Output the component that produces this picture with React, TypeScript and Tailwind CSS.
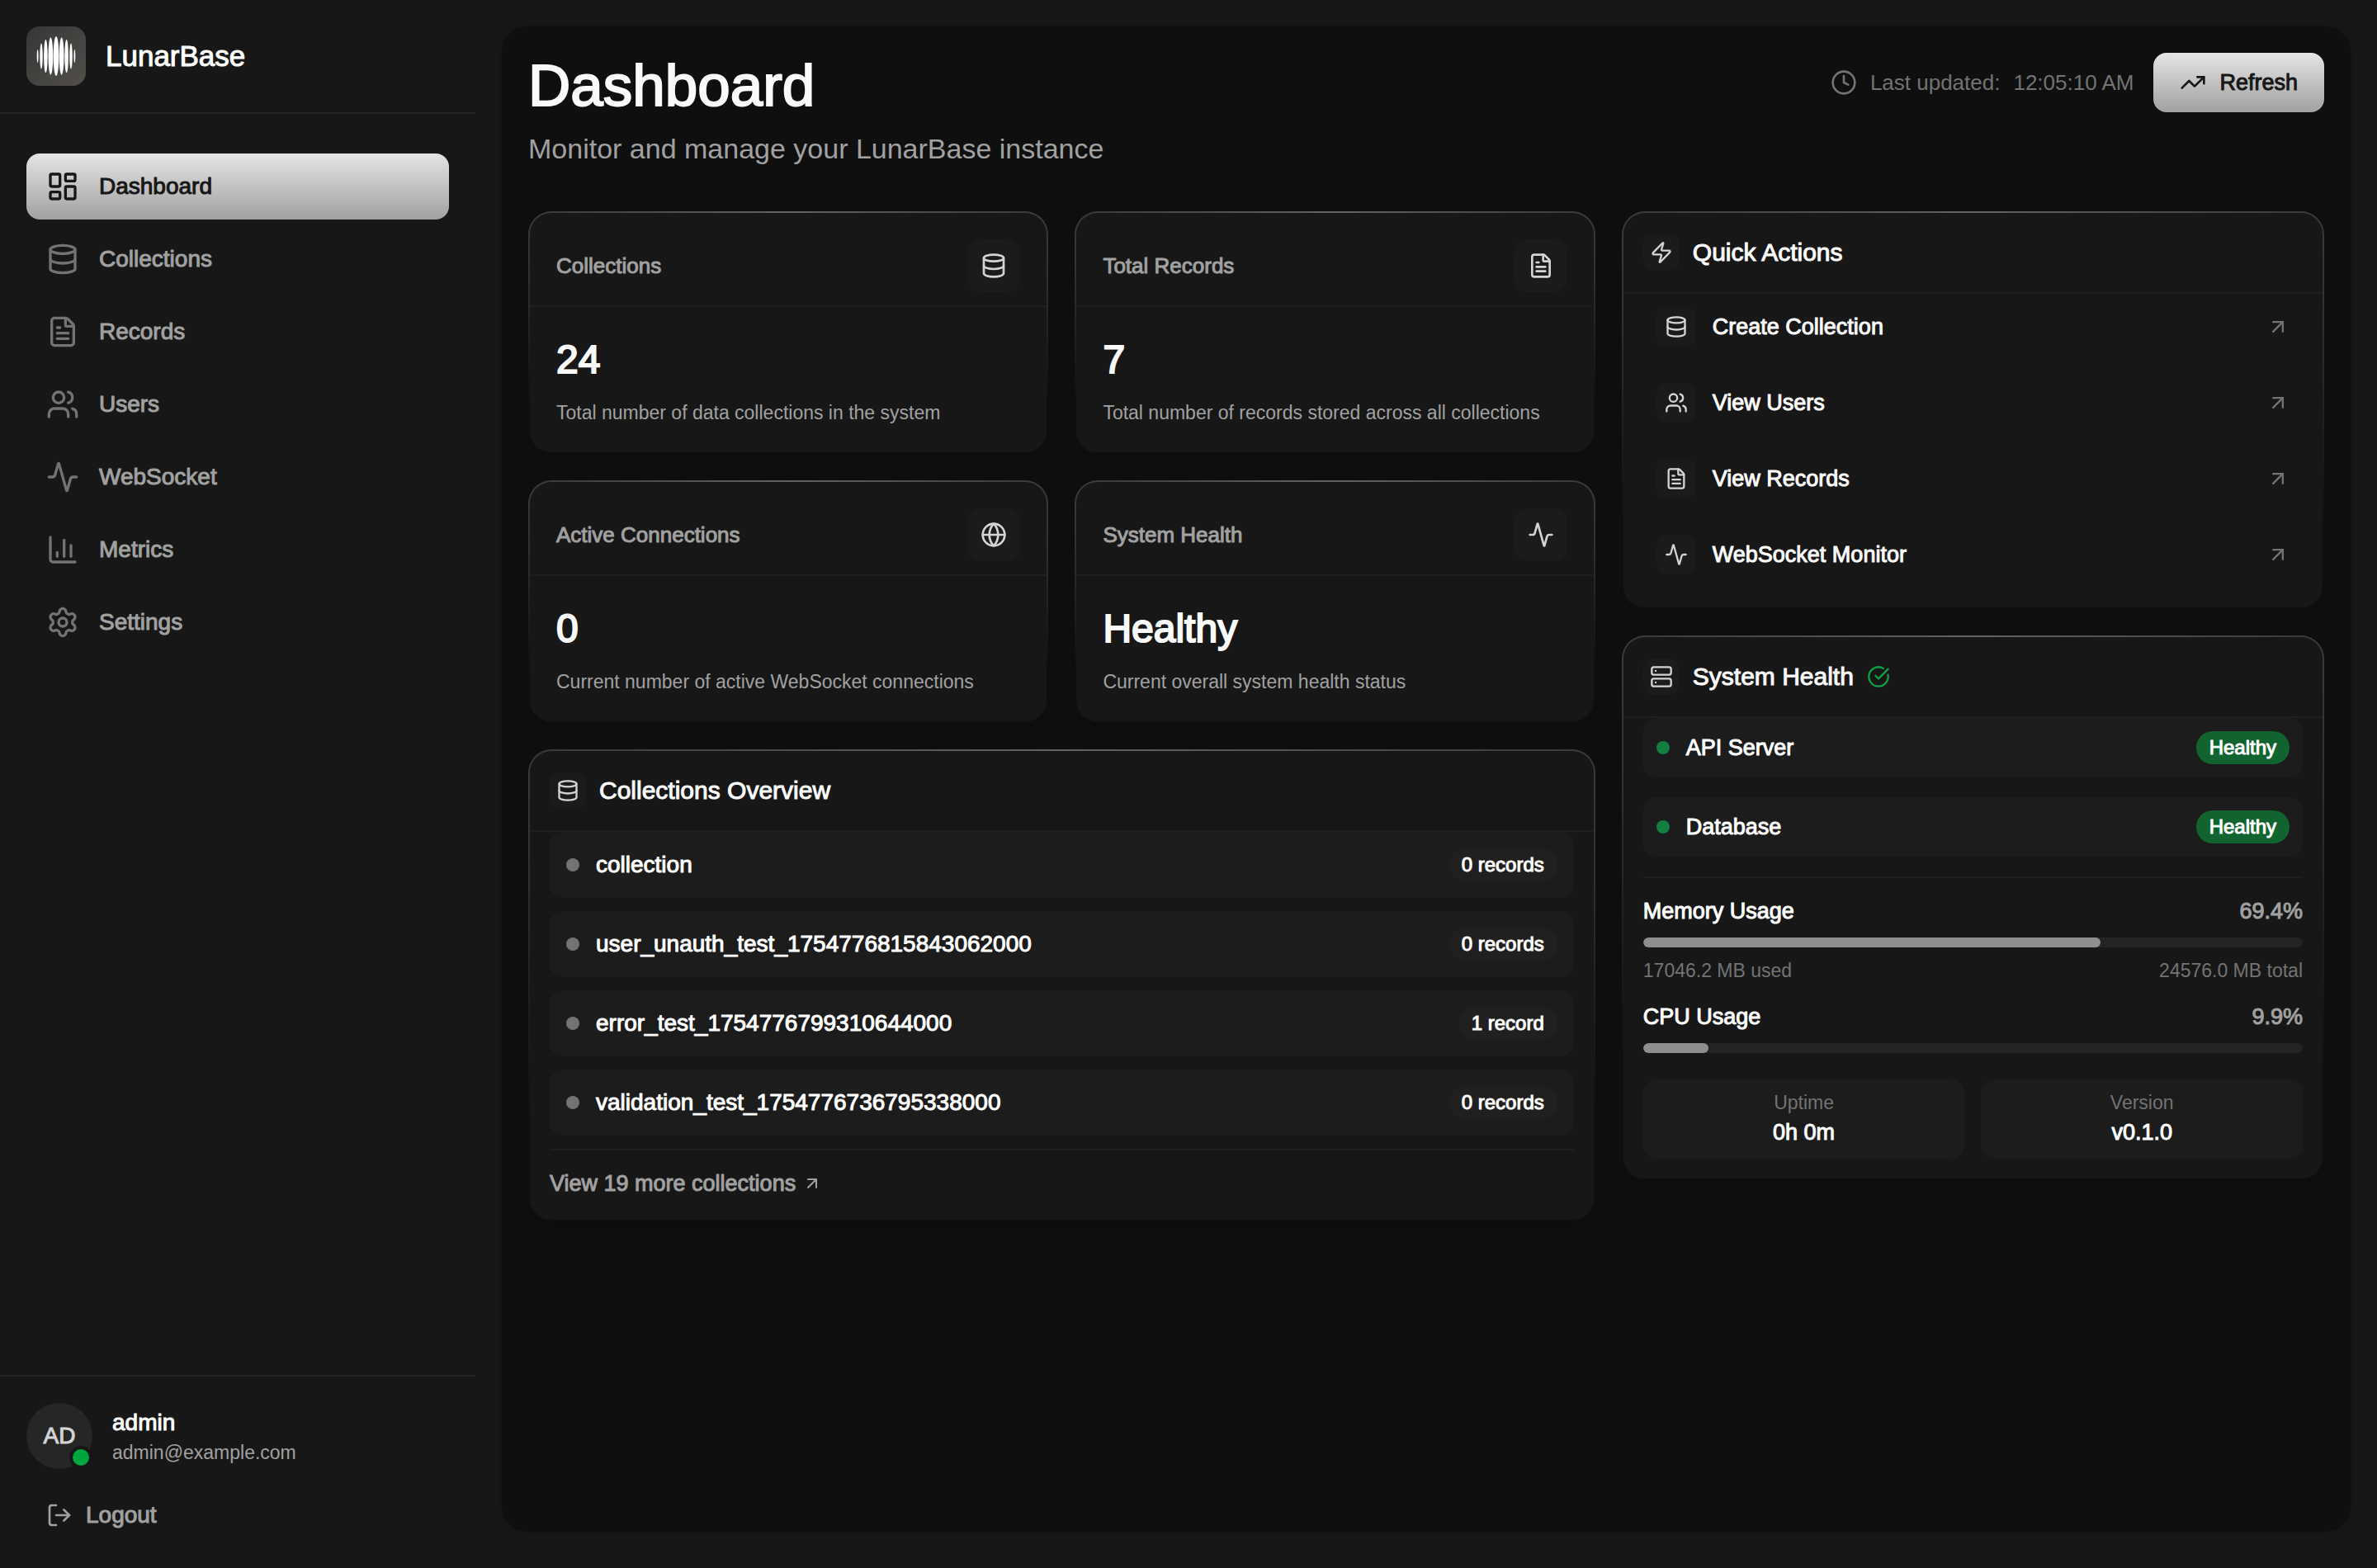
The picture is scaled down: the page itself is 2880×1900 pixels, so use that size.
import {
  Activity,
  ArrowUpRight,
  ChartColumn,
  CircleCheckBig,
  Clock,
  Database,
  FileText,
  Globe,
  LayoutDashboard,
  LogOut,
  Server,
  Settings,
  TrendingUp,
  Users,
  Zap,
  type LucideIcon,
} from "lucide-react";
import type { ReactNode } from "react";

const medium = "[-webkit-text-stroke:1px_currentColor]";

const navItems: { label: string; icon: LucideIcon; active?: boolean }[] = [
  { label: "Dashboard", icon: LayoutDashboard, active: true },
  { label: "Collections", icon: Database },
  { label: "Records", icon: FileText },
  { label: "Users", icon: Users },
  { label: "WebSocket", icon: Activity },
  { label: "Metrics", icon: ChartColumn },
  { label: "Settings", icon: Settings },
];

const stats: { title: string; value: string; text: string; icon: LucideIcon }[] = [
  { title: "Collections", value: "24", text: "Total number of data collections in the system", icon: Database },
  { title: "Total Records", value: "7", text: "Total number of records stored across all collections", icon: FileText },
  { title: "Active Connections", value: "0", text: "Current number of active WebSocket connections", icon: Globe },
  { title: "System Health", value: "Healthy", text: "Current overall system health status", icon: Activity },
];

const collections = [
  { name: "collection", count: "0 records" },
  { name: "user_unauth_test_1754776815843062000", count: "0 records" },
  { name: "error_test_1754776799310644000", count: "1 record" },
  { name: "validation_test_1754776736795338000", count: "0 records" },
];

const actions: { label: string; icon: LucideIcon }[] = [
  { label: "Create Collection", icon: Database },
  { label: "View Users", icon: Users },
  { label: "View Records", icon: FileText },
  { label: "WebSocket Monitor", icon: Activity },
];

// Centre, half-width and half-height of each vertical sliver of the moon mark.
const slivers = [
  { x: 1.6, w: 0.9, h: 8 },
  { x: 6, w: 1.7, h: 15.5 },
  { x: 11.4, w: 2.3, h: 20 },
  { x: 17.4, w: 2.9, h: 22.8 },
  { x: 24, w: 3.3, h: 24 },
  { x: 30.6, w: 2.9, h: 22.8 },
  { x: 36.6, w: 2.3, h: 20 },
  { x: 42, w: 1.7, h: 15.5 },
  { x: 46.4, w: 0.9, h: 8 },
];

function Logo() {
  return (
    <div className="flex size-[72px] items-center justify-center rounded-2xl bg-linear-to-br from-[#363636] to-[#524f4a]">
      <svg viewBox="0 0 48 48" className="size-12 fill-white" aria-hidden="true">
        {slivers.map((s) => (
          <ellipse key={s.x} cx={s.x} cy={24} rx={s.w} ry={s.h} />
        ))}
      </svg>
    </div>
  );
}

function Sidebar() {
  return (
    <aside className="flex w-[576px] shrink-0 flex-col">
      <div className="flex items-center gap-6 border-b-2 border-[#242424] p-8">
        <Logo />
        <span className={`text-[35px] leading-10 text-white ${medium}`}>LunarBase</span>
      </div>
      <nav className="flex flex-1 flex-col gap-2 px-8 py-12">
        {navItems.map(({ label, icon: Icon, active }) => (
          <a
            key={label}
            href="#"
            aria-current={active ? "page" : undefined}
            className={`flex h-20 items-center gap-6 rounded-2xl px-6 text-[28px] leading-10 ${medium} ${
              active ? "bg-linear-to-b from-[#e5e5e5] to-[#a1a1a1] text-[#171717]" : "text-[#a1a1a1]"
            }`}
          >
            <Icon className={`size-10 ${active ? "" : "text-[#737373]"}`} />
            {label}
          </a>
        ))}
      </nav>
      <div className="border-t-2 border-[#242424] p-8">
        <div className="flex items-center gap-6">
          <div className={`relative flex size-20 items-center justify-center rounded-full bg-[#262626] text-[28px] text-[#d4d4d4] ${medium}`}>
            AD
            <span className="absolute right-0 bottom-0 size-7 rounded-full border-4 border-[#171717] bg-[#00a63e]" />
          </div>
          <div>
            <p className={`text-[28px] leading-10 text-white ${medium}`}>admin</p>
            <p className="text-[23px] leading-8 text-[#a1a1a1]">admin@example.com</p>
          </div>
        </div>
        <button type="button" className={`mt-6 flex h-16 items-center gap-4 px-6 text-[28px] text-[#a1a1a1] ${medium}`}>
          <LogOut className="size-8" />
          Logout
        </button>
      </div>
    </aside>
  );
}

function Card({ children }: { children: ReactNode }) {
  return (
    <section className="rounded-[28px] border-2 border-transparent shadow-[0_8px_20px_rgba(0,0,0,0.15)] [background:linear-gradient(#171717,#171717)_padding-box,radial-gradient(120%_100%_at_50%_0%,#636363,#383838_42%,#222222_65%,#0f0f0f_88%)_border-box]">
      {children}
    </section>
  );
}

function IconTile({ icon: Icon, className }: { icon: LucideIcon; className: string }) {
  return (
    <span className={`flex shrink-0 items-center justify-center bg-[#1b1b1b] text-[#d4d4d4] ${className}`}>
      <Icon className="size-full" />
    </span>
  );
}

function CardHeader({ icon, title, children }: { icon: LucideIcon; title: string; children?: ReactNode }) {
  return (
    <header className="flex items-center gap-4 border-b-2 border-[#1f1f1f] p-6">
      <IconTile icon={icon} className="size-11 rounded-xl p-2" />
      <h2 className={`text-[30px] leading-[48px] text-[#fafafa] ${medium}`}>{title}</h2>
      {children}
    </header>
  );
}

function StatCard({ title, value, text, icon }: (typeof stats)[number]) {
  return (
    <Card>
      <header className="flex items-center justify-between border-b-2 border-[#1f1f1f] px-8 pt-8 pb-4">
        <h2 className={`text-[26px] leading-10 text-[#a1a1a1] ${medium}`}>{title}</h2>
        <IconTile icon={icon} className="size-16 rounded-2xl p-4" />
      </header>
      <div className="p-8">
        <p className="text-5xl leading-16 text-[#fafafa] [-webkit-text-stroke:2px_currentColor]">{value}</p>
        <p className="mt-4 text-[23px] leading-8 text-[#a1a1a1]">{text}</p>
      </div>
    </Card>
  );
}

function CollectionsOverview() {
  return (
    <Card>
      <CardHeader icon={Database} title="Collections Overview" />
      <div className="px-6 pb-6">
        <ul className="flex flex-col gap-4">
          {collections.map((c) => (
            <li key={c.name} className="flex h-20 items-center gap-5 rounded-2xl bg-[#1c1c1c] px-5">
              <span className="size-4 rounded-full bg-[#737373]" />
              <span className={`flex-1 text-[28px] leading-10 text-white ${medium}`}>{c.name}</span>
              <span className={`rounded-full bg-[#202020] px-4 text-2xl leading-10 text-white ${medium}`}>{c.count}</span>
            </li>
          ))}
        </ul>
        <div className="mt-4 border-t-2 border-[#1f1f1f] pt-5">
          <a href="#" className={`inline-flex items-center gap-2 align-top text-[27px] leading-10 text-[#a1a1a1] ${medium}`}>
            View 19 more collections
            <ArrowUpRight className="size-6" />
          </a>
        </div>
      </div>
    </Card>
  );
}

function QuickActions() {
  return (
    <Card>
      <CardHeader icon={Zap} title="Quick Actions" />
      <div className="flex flex-col gap-3 px-6 pb-6">
        {actions.map(({ label, icon }) => (
          <button key={label} type="button" className="flex h-20 items-center gap-5 rounded-2xl px-4 text-left">
            <IconTile icon={icon} className="size-12 rounded-xl p-[10px]" />
            <span className={`flex-1 text-[27px] leading-10 text-[#fafafa] ${medium}`}>{label}</span>
            <ArrowUpRight className="size-7 text-[#737373]" />
          </button>
        ))}
      </div>
    </Card>
  );
}

function Usage({ label, value }: { label: string; value: number }) {
  return (
    <>
      <div className={`flex justify-between text-[27px] leading-10 ${medium}`}>
        <span className="text-white">{label}</span>
        <span className="text-[#a1a1a1]">{value}%</span>
      </div>
      <div
        role="progressbar"
        aria-label={label}
        aria-valuenow={value}
        aria-valuemin={0}
        aria-valuemax={100}
        className="mt-3 h-3 overflow-hidden rounded-full bg-[#242424]"
      >
        <div className="h-full rounded-full bg-[#8e8e8e]" style={{ width: `${value}%` }} />
      </div>
    </>
  );
}

function SystemHealth() {
  return (
    <Card>
      <CardHeader icon={Server} title="System Health">
        <CircleCheckBig className="size-7 text-[#0f9f45]" />
      </CardHeader>
      <div className="px-6 pb-6">
        <ul className="flex flex-col gap-6">
          {["API Server", "Database"].map((name) => (
            <li key={name} className="flex h-[72px] items-center gap-5 rounded-2xl bg-[#1c1c1c] px-4">
              <span className="size-4 rounded-full bg-[#128040]" />
              <span className={`flex-1 text-[27px] leading-10 text-white ${medium}`}>{name}</span>
              <span className={`rounded-full bg-[#11632f] px-4 text-2xl leading-10 text-white ${medium}`}>Healthy</span>
            </li>
          ))}
        </ul>
        <div className="mt-6 border-t-2 border-[#1f1f1f] pt-5">
          <Usage label="Memory Usage" value={69.4} />
          <div className="mt-3 mb-5 flex justify-between text-[23px] leading-8 text-[#737373]">
            <span>17046.2 MB used</span>
            <span>24576.0 MB total</span>
          </div>
          <Usage label="CPU Usage" value={9.9} />
        </div>
        <dl className="mt-8 grid grid-cols-2 gap-5 text-center">
          {[
            ["Uptime", "0h 0m"],
            ["Version", "v0.1.0"],
          ].map(([term, detail]) => (
            <div key={term} className="rounded-2xl bg-[#1c1c1c] p-3">
              <dt className="text-[23px] leading-8 text-[#737373]">{term}</dt>
              <dd className={`text-[27px] leading-10 text-white ${medium}`}>{detail}</dd>
            </div>
          ))}
        </dl>
      </div>
    </Card>
  );
}

export default function App() {
  return (
    <div className="flex min-h-screen bg-[#171717] font-['Liberation_Sans',Arial,sans-serif]">
      <Sidebar />
      <main className="mx-8 mt-8 mb-11 min-w-0 flex-1 rounded-[32px] bg-[#0f0f0f] p-8 shadow-[0_0_6px_#121212]">
        <div className="flex items-start justify-between">
          <div>
            <h1 className="text-[71px] leading-20 text-[#fafafa] [-webkit-text-stroke:2px_currentColor]">Dashboard</h1>
            <p className="mt-2 text-[34px] leading-14 text-[#a1a1a1]">Monitor and manage your LunarBase instance</p>
          </div>
          <div className="flex items-center gap-6">
            <p className="flex items-center gap-4 text-[26px] leading-10 text-[#737373]">
              <Clock className="size-8" />
              <span>Last updated:</span>
              <span>12:05:10 AM</span>
            </p>
            <button
              type="button"
              className={`flex h-[72px] items-center gap-4 rounded-2xl bg-linear-to-b from-[#e5e5e5] to-[#a1a1a1] px-8 text-[27px] text-[#171717] ${medium}`}
            >
              <TrendingUp className="size-8" />
              Refresh
            </button>
          </div>
        </div>
        <div className="mt-12 grid grid-cols-5 items-start gap-8">
          <div className="col-span-3 flex flex-col gap-8">
            <div className="grid grid-cols-2 gap-8">
              {stats.map((s) => (
                <StatCard key={s.title} {...s} />
              ))}
            </div>
            <CollectionsOverview />
          </div>
          <div className="col-span-2 flex flex-col gap-8">
            <QuickActions />
            <SystemHealth />
          </div>
        </div>
      </main>
    </div>
  );
}
